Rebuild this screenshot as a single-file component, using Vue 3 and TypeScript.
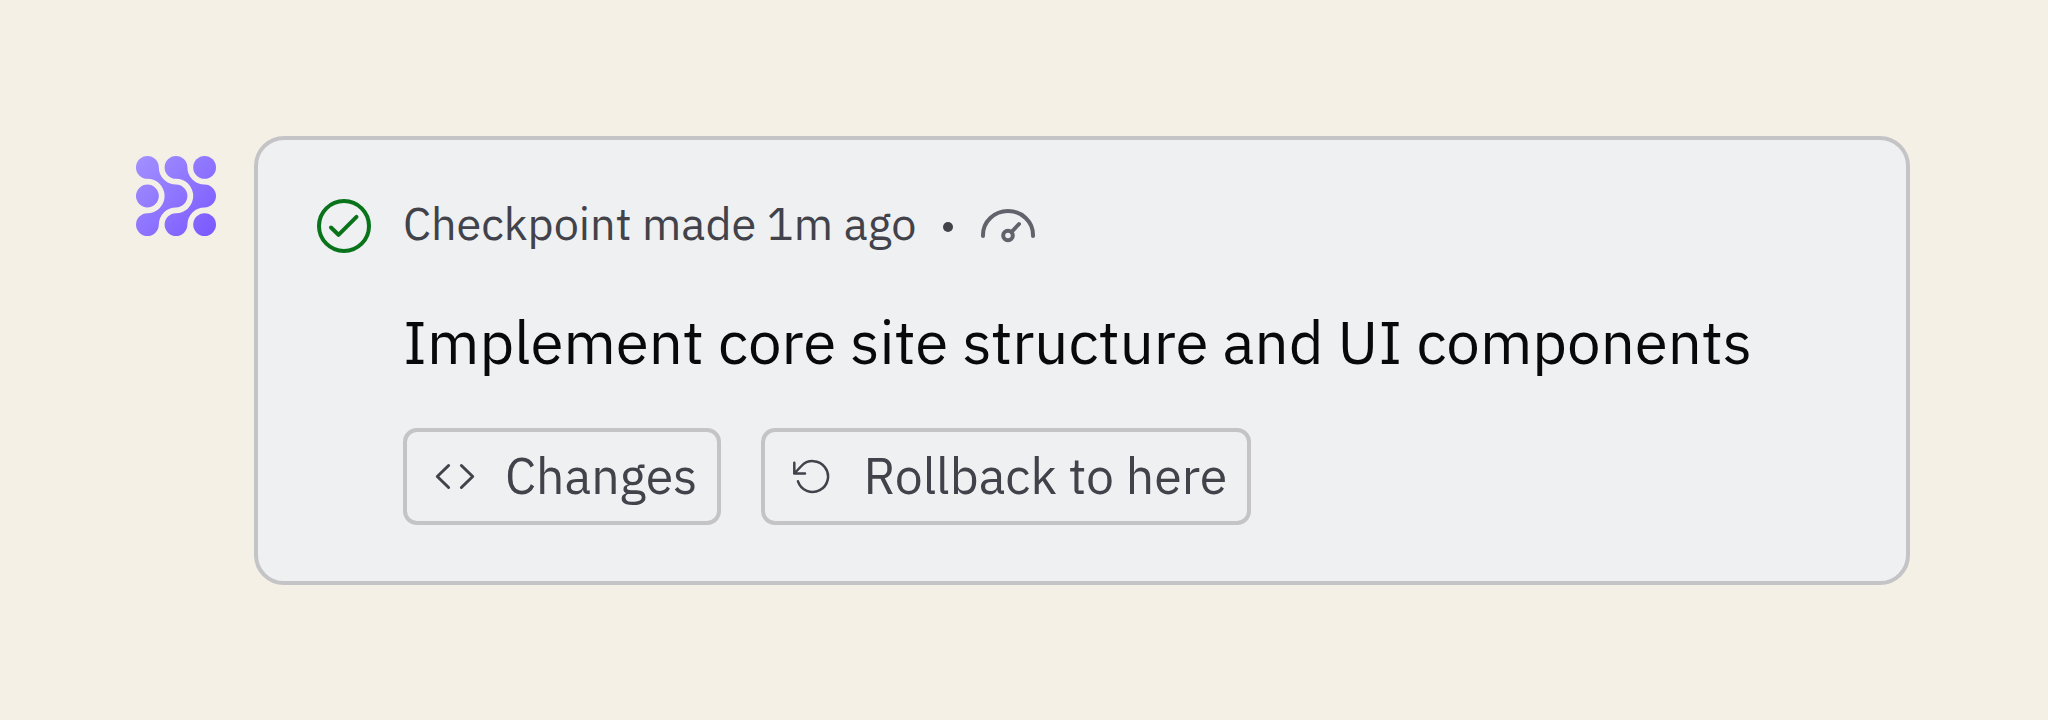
<script setup lang="ts">
interface Action {
  id: 'changes' | 'rollback'
  label: string
}

const checkpoint = {
  status: 'Checkpoint made 1m ago',
  title: 'Implement core site structure and UI components',
}

const actions: Action[] = [
  { id: 'changes', label: 'Changes' },
  { id: 'rollback', label: 'Rollback to here' },
]
</script>

<template>
  <main class="page">
    <svg class="logo" viewBox="0 0 80 80" aria-hidden="true">
      <defs>
        <linearGradient id="logo-fill" gradientUnits="userSpaceOnUse" x1="0" y1="0" x2="80" y2="80">
          <stop offset="0" stop-color="#a391ff" />
          <stop offset="1" stop-color="#7958ff" />
        </linearGradient>
      </defs>
      <g fill="url(#logo-fill)">
        <circle cx="11.4" cy="40" r="11.4" />
        <circle cx="68.6" cy="11.4" r="11.4" />
        <circle cx="68.6" cy="68.6" r="11.4" />
        <path d="M11.4 0A11.4 11.4 0 0 1 22.8 11.4A17.2 17.2 0 0 0 40 28.6A11.4 11.4 0 0 1 40 51.4A17.2 17.2 0 0 0 22.8 68.6A11.4 11.4 0 1 1 11.4 57.2A17.2 17.2 0 0 0 11.4 22.8A11.4 11.4 0 0 1 11.4 0Z" />
        <path d="M40 0A11.4 11.4 0 0 1 51.4 11.4A17.2 17.2 0 0 0 68.6 28.6A11.4 11.4 0 0 1 68.6 51.4A17.2 17.2 0 0 0 51.4 68.6A11.4 11.4 0 1 1 40 57.2A17.2 17.2 0 0 0 40 22.8A11.4 11.4 0 0 1 40 0Z" />
      </g>
    </svg>

    <article class="card">
      <svg class="check" viewBox="0 0 56 56" aria-hidden="true">
        <circle cx="28" cy="28" r="25" />
        <path d="M15 29.500 22.500 36.800 40.500 18.900" />
      </svg>

      <div class="content">
        <div class="status">
          <span>{{ checkpoint.status }}</span>
          <span class="dot"></span>
          <svg class="gauge" viewBox="0 0 56 36" aria-hidden="true">
            <path d="M3 29V28A25 24 0 0 1 53 28V29M31.500 25 39 17" />
            <circle cx="28" cy="28.500" r="4.800" />
          </svg>
        </div>

        <h1 class="title">{{ checkpoint.title }}</h1>

        <div class="actions">
          <button v-for="action in actions" :key="action.id" type="button" class="action">
            <svg v-if="action.id === 'changes'" class="action-icon" viewBox="0 0 40 40" aria-hidden="true">
              <path class="bold" d="M13.600 9.500 2.300 20.500 13.600 31.500M26.400 9.500 37.700 20.500 26.400 31.500" />
            </svg>
            <svg v-else class="action-icon" viewBox="0 0 40 40" aria-hidden="true">
              <path d="M1.300 6.800V17.500H12M1.300 17.500 8.400 10A15.400 15.400 0 1 1 5 25.300" />
            </svg>
            <span>{{ action.label }}</span>
          </button>
        </div>
      </div>
    </article>
  </main>
</template>

<style>
body {
  margin: 0;
  background: #f5f0e6;
}
</style>

<style scoped>
.page {
  box-sizing: border-box;
  min-height: 100vh;
  padding: 136px 138px 135px 136px;
  display: flex;
  align-items: flex-start;
  gap: 38px;
  background: #f5f0e6;
  color: #41424a;
  font-family: "IBM Plex Sans", "Noto Sans", sans-serif;
}

.logo {
  flex: none;
  width: 80px;
  height: 80px;
  margin-top: 20px;
}

.card {
  box-sizing: border-box;
  flex: 1;
  min-width: 0;
  display: flex;
  align-items: flex-start;
  gap: 31px;
  padding: 56px 58px;
  border: 4px solid #c4c4c6;
  border-radius: 30px;
  background: #eff0f2;
}

.check {
  flex: none;
  width: 56px;
  height: 56px;
  margin-top: 2px;
  fill: none;
  stroke: #08731a;
  stroke-width: 4;
  stroke-linecap: round;
  stroke-linejoin: round;
}

.content {
  flex: 1;
  min-width: 0;
}

.status {
  display: flex;
  align-items: center;
  font-size: 45px;
  line-height: 54px;
}

.dot {
  width: 10px;
  height: 10px;
  margin: 8px 27px 0;
  border-radius: 50%;
  background: #41424a;
}

.gauge {
  width: 56px;
  height: 36px;
  margin-top: 4px;
  fill: none;
  stroke: #61626b;
  stroke-width: 4;
  stroke-linecap: round;
}

.title {
  margin: 52px 0 0;
  color: #08090b;
  font-size: 60px;
  font-weight: 400;
  line-height: 80px;
}

.actions {
  display: flex;
  flex-wrap: wrap;
  gap: 40px;
  margin-top: 46px;
}

.action {
  display: flex;
  align-items: center;
  gap: 30px;
  margin: 0;
  padding: 11px 20px 13px 28px;
  border: 4px solid #c4c4c6;
  border-radius: 14px;
  background: transparent;
  color: inherit;
  font-family: inherit;
  font-size: 50px;
  line-height: 65px;
  cursor: pointer;
}

.action-icon {
  flex: none;
  width: 40px;
  height: 40px;
  fill: none;
  stroke: #41424a;
  stroke-width: 2.500;
  stroke-linecap: round;
  stroke-linejoin: round;
}

.action-icon .bold {
  stroke-width: 3;
}
</style>
